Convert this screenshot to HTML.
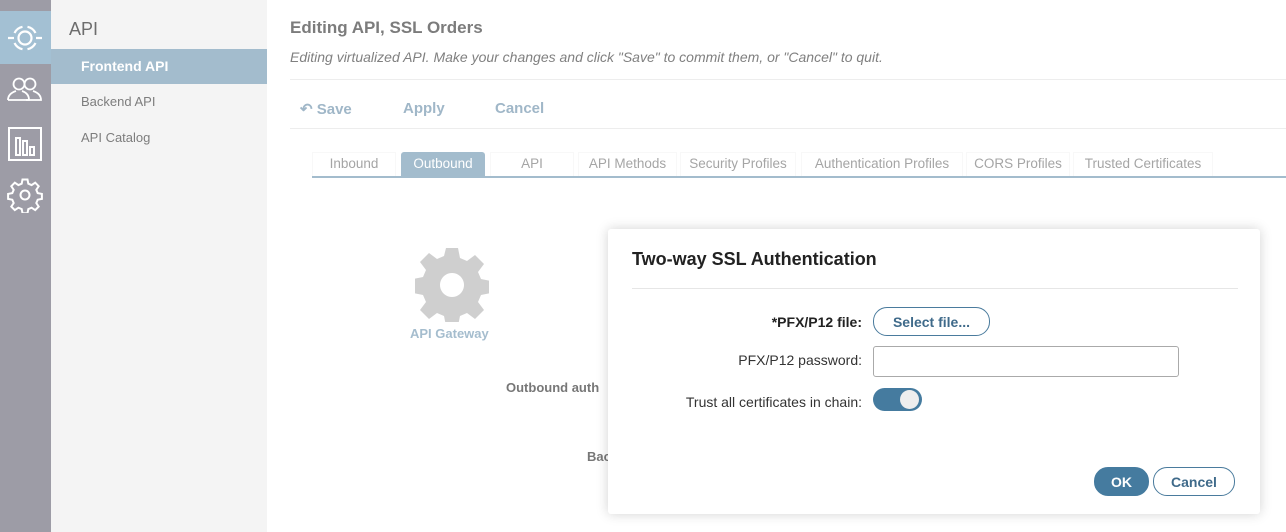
<!DOCTYPE html>
<html><head><meta charset="utf-8"><style>
*{box-sizing:border-box;margin:0;padding:0}
body{width:1286px;height:532px;overflow:hidden;background:#fff;font-family:"Liberation Sans",sans-serif;position:relative}
.rail{position:absolute;left:0;top:0;width:51px;height:532px;background:#9d9ca6}
.rail .act{position:absolute;left:0;top:11px;width:51px;height:53px;background:#a3c0d3}
.rail svg{position:absolute}
.side{position:absolute;left:51px;top:0;width:216px;height:532px;background:#f4f4f4}
.side .h{position:absolute;left:18px;top:19px;font-size:18px;color:#6d6d6d}
.side .sel{position:absolute;left:0;top:49px;width:216px;height:35px;background:#a3bccd;color:#fff;font-weight:bold;font-size:14px;padding:9px 0 0 30px}
.side .it{position:absolute;left:30px;font-size:13px;color:#7d7d7d}
.main{position:absolute;left:267px;top:0;right:0;bottom:0}
.t1{position:absolute;left:23px;top:18px;font-size:17px;font-weight:bold;color:#7c7c7c}
.t2{position:absolute;left:23px;top:49px;font-size:14px;font-style:italic;color:#808080}
.hr{position:absolute;left:23px;right:0;height:1px;background:#ededed}
.tb{position:absolute;top:100px;font-size:15px;font-weight:bold;color:#a0b7c8}
.tabs{position:absolute;left:45px;top:152px;right:0;height:26px;border-bottom:2px solid #a3bccd}
.tab{position:absolute;top:0;height:24px;font-size:13.5px;color:#a5a5a5;text-align:center;padding-top:3px;border:1px solid #f8f8f8;border-bottom:0}
.tab.on{background:#a3bccd;color:#fff;border-color:#a3bccd;border-radius:3px 3px 0 0}
.gw{position:absolute;left:143px;top:326px;font-size:13px;font-weight:bold;color:#a5bdce}
.lbl{position:absolute;font-size:13px;font-weight:bold;color:#777}
.dlg{position:absolute;left:608px;top:229px;width:652px;height:285px;background:#fff;border-radius:3px;box-shadow:0 0 12px rgba(0,0,0,.18)}
.dt{position:absolute;left:24px;top:20px;font-size:18px;font-weight:bold;color:#222}
.dhr{position:absolute;left:24px;right:22px;top:59px;height:1px;background:#e6e6e6}
.fl{position:absolute;right:398px;font-size:14px;color:#333;white-space:nowrap}
.btn{position:absolute;border:1px solid #4a7b9d;border-radius:14px;color:#3f6a8a;font-weight:bold;font-size:14px;text-align:center}
</style></head><body>
<div class="rail">
 <div class="act"></div>
 <svg style="left:7px;top:20px" width="36" height="36" viewBox="0 0 36 36" fill="none" stroke="#fff" stroke-width="2.2"><path d="M7.5 13 A11.5 11.5 0 0 1 15.5 6.8 M20.5 6.8 A11.5 11.5 0 0 1 28.5 13 M28.5 23 A11.5 11.5 0 0 1 20.5 29.2 M15.5 29.2 A11.5 11.5 0 0 1 7.5 23"/><circle cx="18" cy="18" r="6.5"/><path d="M1 18h6 M29 18h6"/></svg>
 <svg style="left:7px;top:76px" width="36" height="28" viewBox="0 0 36 28" fill="none" stroke="#fff" stroke-width="1.8"><circle cx="12" cy="8" r="5.5"/><path d="M1 24c0-6 5-8 8-9 M15 15c3 1 7 3 7 9H1"/><circle cx="23" cy="8" r="5.5"/><path d="M26 15c3 1 8 3 8 9H19"/></svg>
 <svg style="left:8px;top:127px" width="34" height="34" viewBox="0 0 34 34" fill="none" stroke="#fff" stroke-width="2"><rect x="1" y="1" width="32" height="32"/><rect x="8" y="11" width="4" height="17"/><rect x="15" y="14" width="4" height="14"/><rect x="22" y="20" width="4" height="8"/></svg>
 <svg style="left:7px;top:177px" width="36" height="36" viewBox="0 0 36 36" fill="none" stroke="#fff" stroke-width="2"><path d="M15.5 2.5h5l.8 4.2 3.3 1.4 3.6-2.4 3.5 3.5-2.4 3.6 1.4 3.3 4.2.8v5l-4.2.8-1.4 3.3 2.4 3.6-3.5 3.5-3.6-2.4-3.3 1.4-.8 4.2h-5l-.8-4.2-3.3-1.4-3.6 2.4-3.5-3.5 2.4-3.6-1.4-3.3-4.2-.8v-5l4.2-.8 1.4-3.3-2.4-3.6 3.5-3.5 3.6 2.4 3.3-1.4z"/><circle cx="18" cy="18" r="4.5"/></svg>
</div>
<div class="side">
 <div class="h">API</div>
 <div class="sel">Frontend API</div>
 <div class="it" style="top:94px">Backend API</div>
 <div class="it" style="top:130px">API Catalog</div>
</div>
<div class="main">
 <div class="t1">Editing API, SSL Orders</div>
 <div class="t2">Editing virtualized API. Make your changes and click "Save" to commit them, or "Cancel" to quit.</div>
 <div class="hr" style="top:79px"></div>
 <div class="tb" style="left:33px">&#8630; Save</div>
 <div class="tb" style="left:136px">Apply</div>
 <div class="tb" style="left:228px">Cancel</div>
 <div class="hr" style="top:128px"></div>
 <div class="tabs">
  <div class="tab" style="left:0;width:84px">Inbound</div>
  <div class="tab on" style="left:89px;width:84px">Outbound</div>
  <div class="tab" style="left:178px;width:84px">API</div>
  <div class="tab" style="left:266px;width:99px">API Methods</div>
  <div class="tab" style="left:368px;width:116px">Security Profiles</div>
  <div class="tab" style="left:489px;width:162px">Authentication Profiles</div>
  <div class="tab" style="left:654px;width:104px">CORS Profiles</div>
  <div class="tab" style="left:761px;width:140px">Trusted Certificates</div>
 </div>
 <svg style="position:absolute;left:148px;top:248px" width="74" height="74" viewBox="0 0 74 74"><path fill="#cfcfcf" fill-rule="evenodd" d="M31 0h12l2 10 7 3 8-6 9 9-6 8 3 7 10 2v12l-10 2-3 7 6 8-9 9-8-6-7 3-2 10H31l-2-10-7-3-8 6-9-9 6-8-3-7-10-2V31l10-2 3-7-6-8 9-9 8 6 7-3zM37 25a12 12 0 1 0 .01 0z"/></svg>
 <div class="gw">API Gateway</div>
 <div class="lbl" style="left:239px;top:380px">Outbound auth</div>
 <div class="lbl" style="left:320px;top:449px">Bac</div>
</div>
<div class="dlg">
 <div class="dt">Two-way SSL Authentication</div>
 <div class="dhr"></div>
 <div class="fl" style="top:85px;font-weight:bold;color:#222">*PFX/P12 file:</div>
 <div class="btn" style="left:265px;top:78px;width:117px;height:29px;padding-top:6px">Select file...</div>
 <div class="fl" style="top:123px">PFX/P12 password:</div>
 <div style="position:absolute;left:265px;top:117px;width:306px;height:31px;border:1px solid #aaa;border-radius:3px"></div>
 <div class="fl" style="top:165px">Trust all certificates in chain:</div>
 <div style="position:absolute;left:265px;top:159px;width:49px;height:23px;border-radius:12px;background:#457b9f"><div style="position:absolute;right:3px;top:2px;width:19px;height:19px;border-radius:50%;background:#eee"></div></div>
 <div class="btn" style="left:486px;top:238px;width:55px;height:29px;background:#457b9f;border-color:#457b9f;color:#fff;padding-top:6px">OK</div>
 <div class="btn" style="left:545px;top:238px;width:82px;height:29px;padding-top:6px">Cancel</div>
</div>
</body></html>
